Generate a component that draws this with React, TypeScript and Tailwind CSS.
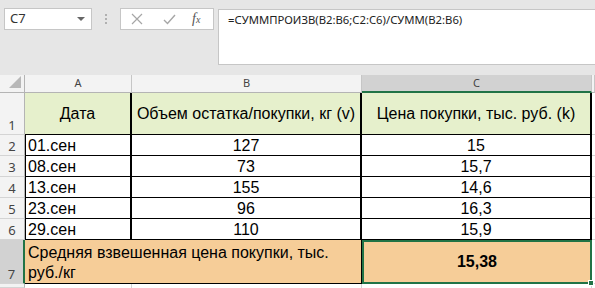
import React from "react";

const ui = "font-['Noto_Sans','Open_Sans',sans-serif]";
const cell = "font-['Liberation_Sans',Arial,sans-serif]";

const GREEN = "bg-[#e6f0cc]";
const ORANGE = "bg-[#f6cd98]";

const rows = [
  { n: 2, date: "01.сен", v: "127", k: "15" },
  { n: 3, date: "08.сен", v: "73", k: "15,7" },
  { n: 4, date: "13.сен", v: "155", k: "14,6" },
  { n: 5, date: "23.сен", v: "96", k: "16,3" },
  { n: 6, date: "29.сен", v: "110", k: "15,9" },
];

function ColHead({ label, selected }: { label: string; selected?: boolean }) {
  return (
    <div
      className={`flex items-center justify-center text-[11px] text-[#444] border-r border-[#c6c6c6] ${ui} ${
        selected ? "bg-[#d2d2d2] border-b-2 border-b-[#217346]" : "bg-[#f3f3f3] border-b border-b-[#b4b4b4]"
      }`}
    >
      {label}
    </div>
  );
}

function RowHead({ label, selected }: { label: string; selected?: boolean }) {
  return (
    <div
      className={`flex items-end justify-center leading-[18px] text-[13px] text-[#444] border-b border-[#d4d4d4] ${ui} ${
        selected ? "bg-[#d2d2d2] border-r-2 border-r-[#217346]" : "bg-[#f3f3f3] border-r border-r-[#b4b4b4]"
      }`}
    >
      {label}
    </div>
  );
}

export default function App() {
  return (
    <div className="w-[595px] h-[288px] overflow-hidden bg-[#e6e6e6]">
      {/* Formula bar */}
      <div className="h-[75px] flex items-start pt-[8px] pl-[4px]">
        <div className={`w-[88px] h-[22px] bg-white border border-[#c6c6c6] flex items-center justify-between pl-[5px] pr-[6px] text-[13px] text-[#333] ${ui}`}>
          <span>C7</span>
          <span className="w-0 h-0 border-l-[4px] border-r-[4px] border-t-[4px] border-l-transparent border-r-transparent border-t-[#666]" />
        </div>
        <div className="w-[28px] h-[22px] flex flex-col items-center justify-center gap-[2px]">
          <span className="w-[2px] h-[2px] bg-[#b0b0b0]" />
          <span className="w-[2px] h-[2px] bg-[#b0b0b0]" />
          <span className="w-[2px] h-[2px] bg-[#b0b0b0]" />
        </div>
        <div className="w-[94px] h-[22px] bg-white border border-[#c6c6c6] flex items-center pl-[10px]">
          <svg width="12" height="12" viewBox="0 0 12 12" className="mr-[20px]">
            <path d="M1 1L11 11M11 1L1 11" stroke="#a6a6a6" strokeWidth="1.2" fill="none" />
          </svg>
          <svg width="13" height="11" viewBox="0 0 13 11" className="mr-[16px]">
            <path d="M1 6L4.5 9.5L12 1" stroke="#a6a6a6" strokeWidth="1.4" fill="none" />
          </svg>
          <span className="font-['Liberation_Serif',serif] italic text-[14px] text-[#555] leading-none">
            f<span className="text-[10px]">x</span>
          </span>
        </div>
        <div className={`ml-[4px] mt-[1px] flex-1 h-[56px] bg-white border border-r-0 border-[#c6c6c6] pl-[9px] pt-[2px] leading-[16px] text-[11.3px] text-[#222] whitespace-nowrap ${ui}`}>
          =СУММПРОИЗВ(B2:B6;C2:C6)/СУММ(B2:B6)
        </div>
      </div>

      {/* Sheet */}
      <div
        className={`grid grid-cols-[25px_107px_230px_230px_1fr] grid-rows-[18px_42px_21px_21px_21px_21px_21px_44px_1fr] h-[213px] bg-white text-[16px] text-black ${cell}`}
      >
        {/* header row */}
        <div className="relative bg-[#f3f3f3] border-r border-b border-[#b4b4b4]">
          <svg width="12" height="12" viewBox="0 0 12 12" className="absolute right-[3px] bottom-[4px]">
            <path d="M12 0L12 12L0 12Z" fill="#b8b8b8" />
          </svg>
        </div>
        <ColHead label="A" />
        <ColHead label="B" />
        <ColHead label="C" selected />
        <ColHead label="" />

        {/* row 1 */}
        <RowHead label="1" />
        <div className={`${GREEN} flex items-center justify-center border-b border-r-2 border-black`}>Дата</div>
        <div className={`${GREEN} flex items-center justify-center border-b border-r-2 border-black whitespace-nowrap`}>
          Объем остатка/покупки, кг (v)
        </div>
        <div className={`${GREEN} flex items-center justify-center border-b border-r-2 border-black whitespace-nowrap`}>
          Цена покупки, тыс. руб. (k)
        </div>
        <div className="border-b border-[#d4d4d4]" />

        {rows.map((r) => (
          <React.Fragment key={r.n}>
            <RowHead label={String(r.n)} />
            <div className="flex items-end pl-[2px] leading-[19px] border-l border-b border-r-2 border-black">{r.date}</div>
            <div className="flex items-end justify-center leading-[19px] border-b border-r-2 border-black">{r.v}</div>
            <div className="flex items-end justify-center leading-[19px] border-b border-r-2 border-black">{r.k}</div>
            <div className="border-b border-[#d4d4d4]" />
          </React.Fragment>
        ))}

        {/* row 7 */}
        <RowHead label="7" selected />
        <div className={`${ORANGE} col-span-2 flex items-end pl-[3px] leading-[20px] border-b border-r border-black`}>
          <span>
            Средняя взвешенная цена покупки, тыс.
            <br />
            руб./кг
          </span>
        </div>
        <div className={`${ORANGE} relative flex items-center justify-center font-bold border-2 border-[#217346]`}>
          15,38
          <span className="absolute right-[-4px] bottom-[-4px] w-[6px] h-[6px] bg-[#217346] border border-white" />
        </div>
        <div className="border-b border-[#d4d4d4]" />

        {/* row 8 */}
        <RowHead label="" />
        <div className="border-r border-[#d4d4d4]" />
        <div className="border-r border-[#d4d4d4]" />
        <div className="border-r border-[#d4d4d4]" />
        <div />
      </div>
    </div>
  );
}
